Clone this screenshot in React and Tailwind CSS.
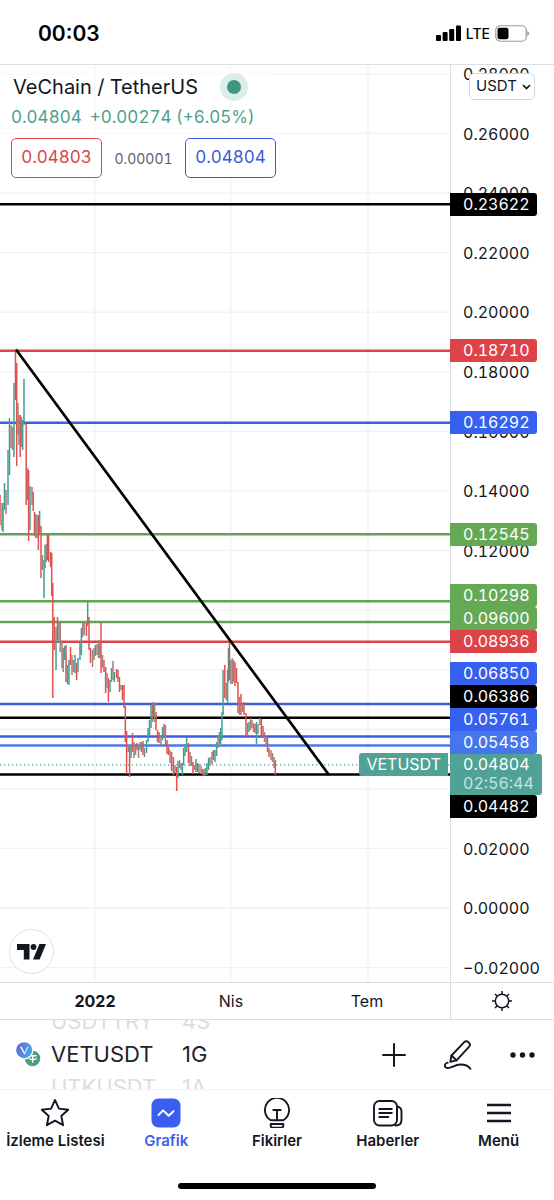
import React, { useState } from "react";

const CHART_TOP = 65;
const UP = "#3f9f93";
const DOWN = "#e0504f";
const MIX = "#9c8178";
const COLORS = { u: UP, d: DOWN, m: MIX };

const toY = (price) => 908 - CHART_TOP - price * 2979;

// an empty label is a tick that the level tags cover
const ticks = [
    "0.28000", "0.26000", "0.24000", "0.22000", "0.20000", "0.18000", "0.16000", "0.14000",
    "0.12000", "", "", "", "", "0.02000", "0.00000", "−0.02000",
];

const levels = [
    { price: 0.23622, color: "#000000" },
    { price: 0.1871, color: "#dc444a" },
    { price: 0.16292, color: "#3a5fe0" },
    { price: 0.12545, color: "#5fa653" },
    { price: 0.10298, color: "#5fa653" },
    { price: 0.096, color: "#5fa653" },
    { price: 0.08936, color: "#dc444a" },
    { price: 0.0685, color: "#3a5fe0" },
    { price: 0.06386, color: "#000000" },
    { price: 0.05761, color: "#3a5fe0" },
    { price: 0.05458, color: "#4a78e6" },
    { price: 0.04482, color: "#000000" },
];

// x, top, bottom, kind (u = up, d = down, m = mixed)
const candles = [
    [0, 495, 525, "d"], [2, 503, 530, "m"], [3, 503, 532, "u"], [4.5, 483, 510, "u"], [6, 490, 514, "m"],
    [8, 450, 505, "u"], [9.5, 418, 475, "u"], [11, 425, 448, "m"], [12.5, 427, 450, "m"], [14, 383, 457, "u"],
    [15.5, 350, 400, "d"], [16.7, 363, 466, "d"], [18, 403, 435, "m"], [19, 415, 445, "m"], [20.2, 415, 457, "d"],
    [21.5, 417, 447, "m"], [22.7, 420, 450, "u"], [24, 379, 425, "u"], [26.2, 424, 505, "d"], [27.5, 468, 500, "m"],
    [28.6, 470, 541, "d"], [30, 486, 530, "u"], [32, 487, 505, "m"], [33.2, 492, 511, "d"], [34.5, 512, 536, "d"],
    [35.6, 514, 538, "m"], [37, 515, 538, "m"], [38.4, 515, 550, "d"], [39.6, 511, 535, "u"], [41, 526, 578, "d"],
    [42.5, 555, 570, "m"], [44, 560, 598, "u"], [45, 545, 568, "u"], [46.2, 544, 562, "m"], [47.4, 535, 560, "d"],
    [48.6, 535, 562, "d"], [50.6, 552, 567, "d"], [51.7, 553, 596, "d"], [52.8, 583, 698, "d"], [54.2, 617, 650, "d"],
    [56, 627, 670, "u"], [57.5, 617, 640, "d"], [59, 622, 643, "m"], [60.2, 623, 652, "m"], [62, 642, 668, "m"],
    [63.2, 648, 672, "m"], [64.6, 646, 660, "u"], [66, 645, 682, "d"], [67.5, 665, 684, "u"], [69, 660, 685, "u"],
    [70.5, 647, 665, "d"], [72, 655, 675, "m"], [73.5, 660, 672, "m"], [75, 655, 673, "u"], [76.6, 663, 680, "d"],
    [78, 658, 672, "u"], [80, 643, 660, "u"], [81.4, 628, 655, "u"], [82.8, 623, 637, "m"], [84.2, 622, 635, "m"],
    [86.4, 623, 636, "d"], [87.7, 602, 626, "u"], [89, 617, 650, "d"], [90.5, 648, 663, "d"], [92.5, 650, 667, "m"],
    [94, 648, 660, "m"], [95.4, 645, 656, "u"], [97, 644, 655, "m"], [98.5, 640, 658, "m"], [99.8, 642, 658, "m"],
    [101, 622, 673, "d"], [102.5, 655, 668, "m"], [104, 660, 672, "d"], [105.6, 667, 693, "d"], [107, 673, 688, "m"],
    [108.4, 678, 702, "d"], [110, 680, 692, "u"], [111.5, 668, 682, "u"], [113, 661, 680, "m"], [114.4, 672, 682, "u"],
    [116.6, 669, 678, "d"], [118, 670, 682, "d"], [119.5, 677, 692, "d"], [121, 685, 690, "m"], [122.5, 685, 700, "d"],
    [124, 685, 708, "d"], [125.3, 706, 742, "d"], [126.6, 731, 774, "d"], [128.2, 747, 752, "m"], [129.6, 747, 777, "d"],
    [131, 745, 758, "u"], [132.5, 733, 752, "d"], [134, 742, 758, "m"], [135.5, 744, 755, "m"], [137, 743, 750, "d"],
    [138.5, 745, 758, "m"], [140, 742, 750, "m"], [141.5, 742, 752, "u"], [143, 741, 755, "d"], [144.5, 748, 757, "m"],
    [146.6, 740, 753, "u"], [148, 728, 742, "u"], [149.5, 720, 735, "u"], [151, 705, 728, "u"], [152.4, 703, 722, "m"],
    [153.4, 702, 716, "d"], [154.6, 703, 722, "m"], [156, 712, 730, "d"], [157.5, 730, 742, "d"], [159, 732, 743, "d"],
    [161, 735, 745, "m"], [162.6, 727, 740, "u"], [164, 724, 737, "d"], [165.5, 725, 745, "m"], [167, 740, 754, "d"],
    [168.5, 747, 755, "d"], [170, 750, 763, "m"], [171.6, 752, 771, "d"], [173.4, 757, 775, "d"], [175, 765, 773, "m"],
    [176.7, 767, 791, "d"], [178, 761, 778, "u"], [179.5, 760, 768, "m"], [181, 763, 770, "m"], [182.4, 763, 775, "u"],
    [183.6, 748, 765, "u"], [185, 744, 756, "u"], [186.6, 738, 752, "u"], [188.5, 743, 763, "d"], [190, 752, 766, "m"],
    [191.5, 756, 766, "m"], [193, 762, 774, "d"], [194.6, 765, 770, "m"], [196, 759, 772, "u"], [197.6, 763, 772, "d"],
    [199, 764, 773, "m"], [201, 766, 774, "m"], [202.5, 769, 775, "d"], [204, 769, 776, "m"], [205.5, 768, 775, "u"],
    [207, 763, 775, "u"], [208.6, 758, 770, "u"], [210, 757, 766, "m"], [212, 752, 764, "m"], [213.4, 750, 760, "d"],
    [215, 750, 762, "u"], [216.6, 742, 756, "u"], [218, 735, 748, "m"], [219.4, 732, 744, "m"], [220.7, 728, 744, "u"],
    [222, 712, 740, "u"], [223.1, 670, 715, "u"], [224.8, 665, 698, "d"], [226.2, 683, 700, "m"], [227.6, 670, 703, "u"],
    [228.5, 648, 682, "u"], [229.4, 641, 680, "d"], [230.8, 660, 684, "m"], [232.2, 658, 684, "m"], [233.6, 660, 682, "m"],
    [235, 662, 686, "d"], [236.5, 668, 683, "d"], [238, 682, 713, "d"], [239.5, 697, 715, "m"], [241, 694, 715, "d"],
    [242.5, 704, 712, "m"], [244, 702, 715, "d"], [246, 713, 738, "d"], [247.5, 723, 735, "m"], [249, 722, 732, "u"],
    [250.5, 718, 730, "m"], [252, 720, 728, "m"], [253.5, 723, 732, "m"], [255, 724, 733, "d"], [256.5, 722, 744, "u"],
    [258, 724, 734, "m"], [259.8, 718, 725, "m"], [261.3, 719, 738, "d"], [263, 726, 738, "d"], [264.5, 732, 742, "m"],
    [266, 738, 744, "m"], [267.5, 738, 752, "d"], [269, 748, 757, "d"], [271, 750, 760, "m"], [272.5, 753, 762, "m"],
    [274, 757, 768, "m"], [275.3, 760, 775, "d"],
];

function StatusBar() {
    return (
        <header className="flex h-[65px] items-center justify-between border-b border-[#dcdee6] pt-[3px] pr-[25px] pl-[38px]">
            <span className="text-[21px] font-semibold text-black">00:03</span>
            <div className="flex items-center gap-[5px]">
                <svg width="25" height="17" viewBox="0 0 25 17" fill="#000" aria-hidden="true">
                    <rect x="0" y="10" width="5" height="6" rx="1" />
                    <rect x="6.6" y="7" width="5" height="9" rx="1" />
                    <rect x="13.2" y="4" width="5" height="12" rx="1" />
                    <rect x="20" y="0.5" width="5" height="15.5" rx="1" />
                </svg>
                <span className="text-[14px] leading-5 font-medium text-black">LTE</span>
                <svg width="34" height="17" viewBox="0 0 34 17" aria-hidden="true">
                    <rect x="0.75" y="0.75" width="30.5" height="15.5" rx="4.5" fill="none" stroke="#9a9a9a" strokeWidth="1.2" />
                    <rect x="2.5" y="2.7" width="11" height="11.6" rx="2.2" fill="#000" />
                    <path d="M32.400 6v5c1-.4 1.600-1.300 1.600-2.500S33.400 6.400 32.400 6Z" fill="#8a8a8a" />
                </svg>
            </div>
        </header>
    );
}

function Legend() {
    return (
        <div className="absolute top-0 left-0 bg-white/60 pt-2 pl-[11px] tabular-nums">
            <div className="flex h-7 items-center gap-[22px] pl-[2px]">
                <h1 className="text-[20px] text-[#131722]">VeChain / TetherUS</h1>
                <span className="flex size-7 items-center justify-center rounded-full bg-[#dbeeeb]">
                    <span className="size-[14px] rounded-full bg-[#42957f]"></span>
                </span>
            </div>
            <p className="mt-1 flex gap-2 text-[17px] leading-6 text-[#4c9f8e]">
                <span>0.04804</span>
                <span>+0.00274 (+6.05%)</span>
            </p>
            <div className="mt-[9px] flex items-center gap-[11px]">
                <button className="h-10 w-[91px] rounded-[5px] border border-[#d6464d] bg-white text-[17px] text-[#d6464d]">0.04803</button>
                <span className="w-[61px] text-center text-[14px] text-[#5d606b]">0.00001</span>
                <button className="h-10 w-[91px] rounded-[5px] border border-[#3a5bd6] bg-white text-[17px] text-[#3a5bd6]">0.04804</button>
            </div>
        </div>
    );
}

function Plot() {
    return (
        <div className="relative flex-1 overflow-hidden">
            <svg className="block h-full w-full" role="img" aria-label="VETUSDT">
                <g stroke="#f0f1f3" strokeWidth="1.3">
                    {ticks.map((t, i) => (
                        <line key={i} x1="0" x2="100%" y1={toY(0.28 - i * 0.02)} y2={toY(0.28 - i * 0.02)} />
                    ))}
                    <line x1="95" x2="95" y1="0" y2="100%" />
                    <line x1="230.5" x2="230.5" y1="0" y2="100%" />
                    <line x1="368" x2="368" y1="0" y2="100%" />
                </g>
                {levels.map((l) => (
                    <line key={l.price} x1="0" x2="100%" y1={toY(l.price)} y2={toY(l.price)} stroke={l.color} strokeWidth="2.5" />
                ))}
                <line x1="0" x2="100%" y1={toY(0.04804)} y2={toY(0.04804)} stroke="#4f9d90" strokeWidth="1.3" strokeDasharray="1.3 2.700" />
                <g transform={`translate(0 ${-CHART_TOP})`}>
                    {candles.map(([x, top, bottom, kind]) => (
                        <line key={x} x1={x} x2={x} y1={top} y2={bottom} stroke={COLORS[kind]} strokeWidth="1.5" />
                    ))}
                    <path d="M16 349.500 329 775" stroke="#000" strokeWidth="2.700" fill="none" />
                </g>
            </svg>
            <Legend />
            <span className="absolute top-[688px] right-[2px] h-[23px] rounded-l-[3px] bg-[#50a296] px-[7px] text-[16px] leading-[23px] text-white">
                VETUSDT
            </span>
            <div className="absolute bottom-2 left-[9px] flex size-[45px] items-center justify-center rounded-full border border-[#e0e1e4] bg-white">
                <svg width="29" height="16" viewBox="0 0 29 16" fill="#131722" aria-label="TradingView">
                    <path d="M0 0h12.500v15.500H6.800V5.900H0Z" />
                    <circle cx="16.500" cy="3" r="2.900" />
                    <path d="M22.400 0H29l-6.400 15.500H16Z" />
                </svg>
            </div>
        </div>
    );
}

function Tag({ className, children }) {
    return (
        <div className={`h-[23px] w-[87px] rounded-r-[3px] pl-[13px] text-[16px] leading-[23px] text-white ${className}`}>
            {children}
        </div>
    );
}

function PriceScale() {
    return (
        <div className="relative w-[104px] shrink-0 border-l border-[#dcdee6] tabular-nums">
            <div className="flex h-full flex-col justify-between pb-[5px] pl-3 text-[16px] leading-[18px] text-[#131722]">
                {ticks.map((t, i) => (
                    <span key={i} className="h-[18px]">{t}</span>
                ))}
            </div>
            <div className="absolute top-2 left-[18px]">
                <select
                    aria-label="Currency"
                    className="h-[27px] w-[66px] appearance-none rounded-[5px] border border-[#d5d7de] bg-white pl-[6px] text-[15px] text-[#131722]"
                >
                    <option>USDT</option>
                </select>
                <svg className="pointer-events-none absolute top-[11px] right-1" width="9" height="6" viewBox="0 0 9 6" fill="none" stroke="#131722" strokeWidth="1.700" aria-hidden="true">
                    <path d="m1 1 3.500 3.500L8 1" />
                </svg>
            </div>
            <div className="absolute top-[128px] -left-px">
                <Tag className="bg-black">0.23622</Tag>
            </div>
            <div className="absolute top-[274px] -left-px">
                <Tag className="bg-[#dc444a]">0.18710</Tag>
            </div>
            <div className="absolute top-[346px] -left-px">
                <Tag className="bg-[#3560f0]">0.16292</Tag>
            </div>
            <div className="absolute top-[458px] -left-px">
                <Tag className="bg-[#65a955]">0.12545</Tag>
            </div>
            <div className="absolute top-[519px] -left-px">
                <Tag className="bg-[#65a955]">0.10298</Tag>
                <Tag className="bg-[#65a955]">0.09600</Tag>
                <Tag className="bg-[#dc444a]">0.08936</Tag>
            </div>
            <div className="absolute top-[597px] -left-px">
                <Tag className="bg-[#3560f0]">0.06850</Tag>
                <Tag className="bg-black">0.06386</Tag>
                <Tag className="bg-[#3560f0]">0.05761</Tag>
                <Tag className="bg-[#4576ec]">0.05458</Tag>
                <div className="h-[41px] w-[92px] rounded-r-[3px] bg-[#50a296] pt-px pl-[13px] text-[16px] leading-[19px] text-white">
                    <div>0.04804</div>
                    <div className="text-white/70">02:56:44</div>
                </div>
                <Tag className="bg-black">0.04482</Tag>
            </div>
        </div>
    );
}

function TimeScale() {
    return (
        <div className="flex h-[38px] border-y border-[#dcdee6] text-[16px] text-[#131722]">
            <div className="flex-1">
                <div className="ml-[27px] grid h-full w-[408px] grid-cols-3 items-center text-center">
                    <span className="font-bold">2022</span>
                    <span>Nis</span>
                    <span>Tem</span>
                </div>
            </div>
            <div className="flex w-[104px] shrink-0 items-center justify-center border-l border-[#dcdee6] pr-[2px]">
                <button aria-label="Settings">
                    <svg width="20" height="20" viewBox="0 0 20 20" fill="none" stroke="#131722" strokeWidth="1.500">
                        <circle cx="10" cy="10" r="6.700" />
                        <path d="M10 0v3.300M10 16.700V20M0 10h3.300M16.700 10H20M3 3l2.300 2.300M14.700 14.700 17 17M3 17l2.300-2.300M14.700 5.300 17 3" />
                    </svg>
                </button>
            </div>
        </div>
    );
}

function Wheel({ items, className }) {
    return (
        <div className={`flex h-[69px] flex-col justify-center overflow-hidden text-[22px] leading-[33px] ${className}`}>
            {items.map((item, i) => (
                <span key={item} className={i === 1 ? "shrink-0 text-[#20232c]" : "shrink-0 text-[#dcdde1]"}>
                    {item}
                </span>
            ))}
        </div>
    );
}

function SymbolBar() {
    return (
        <div className="flex h-[70px] items-center border-b border-[#f0f1f3] pr-[19px] pl-4">
            <svg width="25" height="25" viewBox="0 0 25 25" aria-hidden="true">
                <defs>
                    <linearGradient id="vet" x1="0" y1="0" x2="1" y2="0.3">
                        <stop offset="0" stopColor="#6a63cf" />
                        <stop offset="1" stopColor="#45a5ea" />
                    </linearGradient>
                </defs>
                <circle cx="16.500" cy="16.500" r="7.800" fill="#4e9f80" />
                <path d="M13 13.800h7.500M16.700 13.800v7M13 16.500c2 1.200 5.500 1.200 7.500 0" stroke="#fff" strokeWidth="1.400" fill="none" />
                <circle cx="8.200" cy="8.200" r="9.200" fill="#fff" />
                <circle cx="8.200" cy="8.200" r="8" fill="url(#vet)" />
                <path d="M4 4.700h1.600l3 6 2.800-6h1.200L8.500 12.800Z" fill="#fff" />
            </svg>
            <Wheel items={["USDTTRY", "VETUSDT", "UTKUSDT"]} className="ml-[10px] w-[131px]" />
            <Wheel items={["4S", "1G", "1A"]} className="" />
            <div className="ml-auto flex items-center gap-[38px]">
                <button aria-label="Add">
                    <svg width="24" height="24" viewBox="0 0 24 24" fill="none" stroke="#131722" strokeWidth="2" strokeLinecap="round">
                        <path d="M12 1v22M1 12h22" />
                    </svg>
                </button>
                <button aria-label="Draw">
                    <svg width="28" height="30" viewBox="0 0 28 30" fill="none" stroke="#131722" strokeWidth="1.900" strokeLinecap="round" strokeLinejoin="round">
                        <path d="M7.500 15.500 20.200 2.200a2.900 2.900 0 0 1 4.200 0l.6.600a2.900 2.900 0 0 1 0 4L12.500 20.300 6.300 21.800Z" />
                        <path d="m7.500 15.500 5 4.800" />
                        <path d="M3.700 22.700c-3 .8-3.700 3.200-2 4.700 3.500 3 8.500-3.100 14.800-2.900 5.200.1 8.200 1.500 9.800 4.300" />
                    </svg>
                </button>
                <button aria-label="More">
                    <svg width="25" height="6" viewBox="0 0 25 6" fill="#131722">
                        <circle cx="3" cy="3" r="2.700" />
                        <circle cx="12.500" cy="3" r="2.700" />
                        <circle cx="22" cy="3" r="2.700" />
                    </svg>
                </button>
            </div>
        </div>
    );
}

const tabs = [
    {
        name: "İzleme Listesi",
        icon: <path d="m15 2 3.900 8.600 9.300 1.100-6.900 6.300 1.800 9.200-8.100-4.600-8.100 4.600 1.800-9.200-6.900-6.300 9.300-1.100Z" />,
    },
    {
        name: "Grafik",
        icon: (
            <>
                <rect x="0.500" y="0.500" width="29" height="29" rx="7" fill="#3a5ff0" stroke="none" />
                <path d="m7.500 17 4.600-4.600 5.600 5.400 4.800-4.600" stroke="#fff" strokeWidth="2" />
            </>
        ),
    },
    {
        name: "Fikirler",
        icon: (
            <>
                <path d="M8.700 22.300a12.100 12.100 0 1 1 12.600 0Z" />
                <path d="M11.300 12h7.400M15 12v10.300" />
                <path d="M8.700 26h12.600v1.600a2 2 0 0 1-2 2h-8.600a2 2 0 0 1-2-2Z" />
            </>
        ),
    },
    {
        name: "Haberler",
        icon: (
            <>
                <rect x="1" y="3" width="23" height="24.500" rx="5.500" />
                <path d="M24 8.500c2.700.4 4.500 2 4.500 5V22c0 3.500-2.500 5.500-6 5.500M24 8.500V21" />
                <path d="M6.300 11h12.500M6.300 15h12.500M6.300 19h9" />
            </>
        ),
    },
    {
        name: "Menü",
        icon: <path d="M3 7h24M3 15h24M3 23h24" strokeWidth="2.400" strokeLinecap="butt" />,
    },
];

function TabBar() {
    const [active, setActive] = useState("Grafik");
    return (
        <nav className="grid grid-cols-5 pt-2">
            {tabs.map((tab) => (
                <button
                    key={tab.name}
                    onClick={() => setActive(tab.name)}
                    className={
                        tab.name === active
                            ? "flex flex-col items-center gap-[3px] text-[15px] leading-5 font-semibold whitespace-nowrap text-[#3a5ff0]"
                            : "flex flex-col items-center gap-[3px] text-[15px] leading-5 font-semibold whitespace-nowrap text-[#131722]"
                    }
                >
                    <svg width="30" height="30" viewBox="0 0 30 30" fill="none" stroke="#131722" strokeWidth="1.900" strokeLinecap="round" strokeLinejoin="round" aria-hidden="true">
                        {tab.icon}
                    </svg>
                    {tab.name}
                </button>
            ))}
        </nav>
    );
}

export default function App() {
    return (
        <div className="flex min-h-screen flex-col bg-white font-['Inter',sans-serif]">
            <StatusBar />
            <main className="flex h-[917px]">
                <Plot />
                <PriceScale />
            </main>
            <TimeScale />
            <SymbolBar />
            <TabBar />
            <div className="mx-auto mt-auto mb-[11px] h-[6px] w-[198px] rounded-full bg-black"></div>
        </div>
    );
}
